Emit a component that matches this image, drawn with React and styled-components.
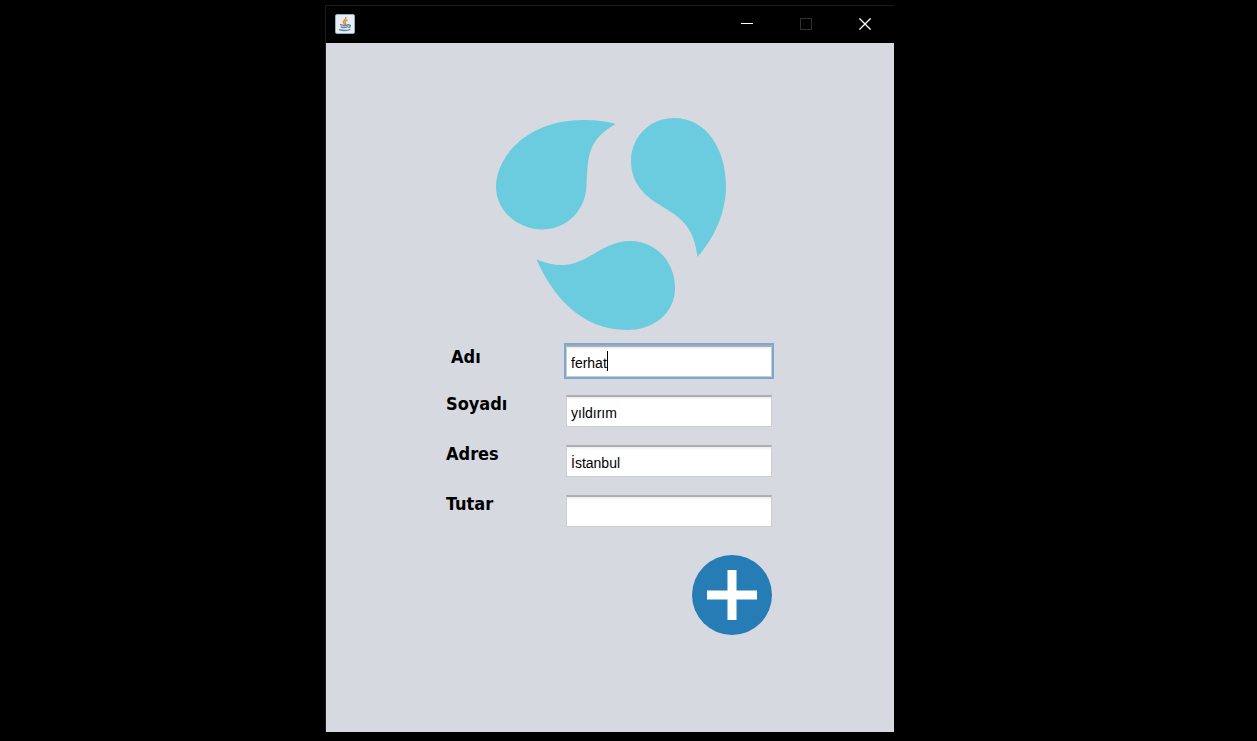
import React from "react";
import styled, { createGlobalStyle, css } from "styled-components";

const GlobalStyle = createGlobalStyle`
  *, *::before, *::after { box-sizing: border-box; }
  html, body, #root { height: 100%; }
  body { margin: 0; background: #000; }
`;

const Desktop = styled.main`
  min-height: 100%;
  padding: 5px 38px 9px 0;
  display: flex;
  justify-content: center;
  align-items: stretch;
`;

const Window = styled.section`
  width: 100%;
  max-width: 569px;
  display: flex;
  flex-direction: column;
  border-top: 1px solid #1c1c1c;
  border-left: 1px solid #1c1c1c;
`;

const TitleBar = styled.header`
  height: 37px;
  padding: 0 0 2px 9px;
  display: flex;
  align-items: center;
  justify-content: space-between;
  background: #000;
`;

const Controls = styled.div`
  display: flex;
  gap: 1px;
  align-self: stretch;
`;

const ControlButton = styled.button`
  width: 58px;
  padding: 0;
  border: 0;
  display: flex;
  align-items: center;
  justify-content: center;
  background: transparent;
  color: ${(p) => (p.disabled ? "#333" : "#fff")};
`;

const Content = styled.form`
  flex: 1;
  padding: 75px 120px 96px;
  display: flex;
  flex-direction: column;
  background: #d6d9e0;
`;

const Logo = styled.svg`
  align-self: center;
  display: block;
  margin: 0 0 13px 2px;
`;

const Fields = styled.div`
  display: flex;
  flex-direction: column;
  gap: 14px;
`;

const Row = styled.div`
  display: flex;
  justify-content: space-between;
  height: 36px;
`;

const Label = styled.label`
  padding: ${(p) => (p.$indent ? "3px 0 0 5px" : "0")};
  font: bold 18px/22px "DejaVu Sans Condensed", "DejaVu Sans", sans-serif;
  color: #000;
`;

const InputFrame = styled.div`
  position: relative;
  width: 210px;
  padding: 2px;
  ${(p) =>
    p.$active &&
    css`
      padding: 0;
      border: 2px solid #7ba7d0;
    `}
`;

const Input = styled.input`
  display: block;
  width: 100%;
  height: 32px;
  padding: 2px 4px 0;
  border: 1px solid #cbcdd1;
  border-top: 2px solid #abadb2;
  border-radius: 0;
  outline: 0;
  background: linear-gradient(#ececee, #fff 3px);
  font: 14px/20px "Liberation Sans", Arial, sans-serif;
  color: #000;
`;

const Caret = styled.span`
  position: absolute;
  left: 41px;
  top: 6px;
  width: 1px;
  height: 20px;
  background: #000;
`;

const AddButton = styled.button`
  align-self: flex-end;
  width: 80px;
  height: 80px;
  margin: 26px 2px 0 0;
  padding: 0;
  border: 0;
  border-radius: 50%;
  background: #267db6;
`;

const JavaIcon = () => (
  <svg width="20" height="20" viewBox="0 0 20 20" aria-hidden="true">
    <rect x="0.5" y="0.5" width="19" height="19" rx="1.5" fill="#e9eef2" stroke="#8fb0c8" />
    <g fill="none" strokeLinecap="round">
      <path d="M10.8 3.5c1 2-3.4 3-2.4 5 .3.7.9.9.9 1.6M12 6.2c-1.6.9-2.3 1.7-1.6 2.6.4.6.3 1-.2 1.5" stroke="#ee8d3c" strokeWidth="1.5" />
      <path d="M5.5 10.7c2 .8 6 .7 7.800-.1M6.300 13c1.800.7 4.300.6 6-.1M4.500 15.700c3 1.200 8 1.100 10.500-.2M13.500 11c2.500-.6 2.300 1.700.2 2.500" stroke="#5e86a6" strokeWidth="1.4" />
    </g>
  </svg>
);

const fields = [
  { id: "adi", label: "Adı", value: "ferhat", active: true, indent: true },
  { id: "soyadi", label: "Soyadı", value: "yıldırım" },
  { id: "adres", label: "Adres", value: "İstanbul" },
  { id: "tutar", label: "Tutar", value: "" },
];

export default function App() {
  return (
    <>
      <GlobalStyle />
      <Desktop>
        <Window>
          <TitleBar>
            <JavaIcon />
            <Controls>
              <ControlButton type="button" aria-label="Minimize">
                <svg width="12" height="12" viewBox="0 0 12 12">
                  <path d="M0 5.5H12" stroke="currentColor" />
                </svg>
              </ControlButton>
              <ControlButton type="button" aria-label="Maximize" disabled>
                <svg width="12" height="12" viewBox="0 0 12 12">
                  <path d="M.5.5h11v11H.5z" fill="none" stroke="currentColor" />
                </svg>
              </ControlButton>
              <ControlButton type="button" aria-label="Close">
                <svg width="12" height="12" viewBox="0 0 12 12">
                  <path d="M.4.4l11.2 11.2M11.6.4L.4 11.6" stroke="currentColor" strokeWidth="1.3" />
                </svg>
              </ControlButton>
            </Controls>
          </TitleBar>
          <Content onSubmit={(e) => e.preventDefault()}>
            <Logo width="230" height="212" viewBox="0 0 230 212" aria-hidden="true">
              <g fill="#6bccdf">
                <path d="M119.5 6C92 22 92 37 90.5 67C90 92 71 111.5 46 111.5C22 111.5 0 93 0 69C0 38 32 2 87 2C100 2 110 3 119.5 6Z" />
                <path d="M201.5 139C197 94 167 95 147 74C139 65 135 55 135 43C135 20 153 0 178 0C211 0 230 32 230 68C230 94 219 119 201.5 139Z" />
                <path d="M40.5 141.5C49 145 57 147 66 147C92 147 106 123 134 123C160 123 179 144 179 170C179 195 158 212 131 212C86 212 57 179 40.5 141.5Z" />
              </g>
            </Logo>
            <Fields>
              {fields.map((f) => (
                <Row key={f.id}>
                  <Label htmlFor={f.id} $indent={f.indent}>
                    {f.label}
                  </Label>
                  <InputFrame $active={f.active}>
                    <Input id={f.id} type="text" defaultValue={f.value} />
                    {f.active && <Caret />}
                  </InputFrame>
                </Row>
              ))}
            </Fields>
            <AddButton type="submit" aria-label="Ekle">
              <svg width="80" height="80" viewBox="0 0 80 80">
                <path d="M15 40H65M40 15V65" stroke="#fff" strokeWidth="9" />
              </svg>
            </AddButton>
          </Content>
        </Window>
      </Desktop>
    </>
  );
}
